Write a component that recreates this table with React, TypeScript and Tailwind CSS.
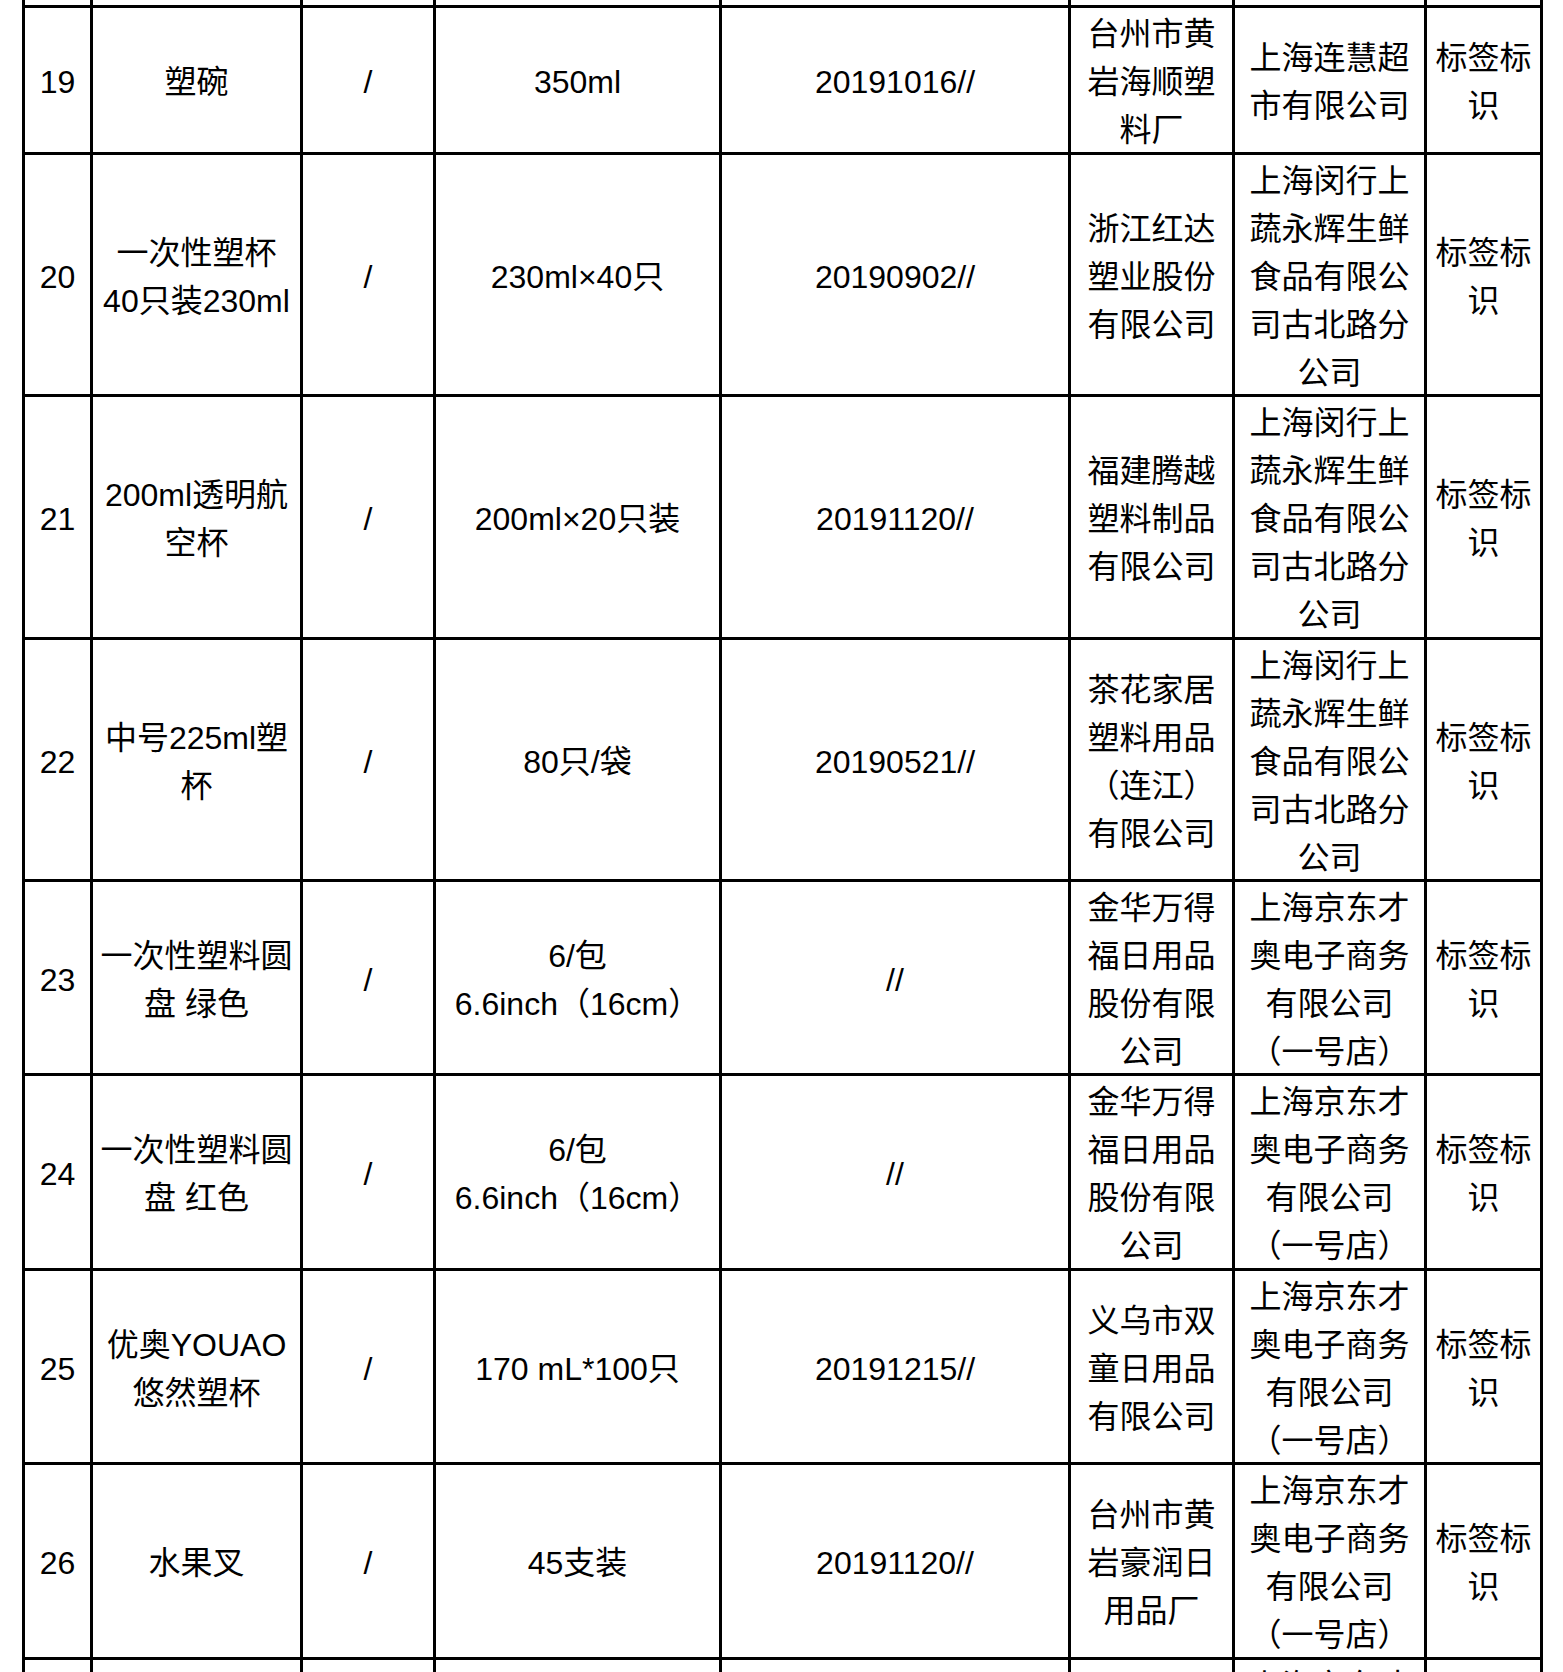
const rows: string[][] = [
  ["", "", "", "", "", "", "", ""],
  ["19", "塑碗", "/", "350ml", "20191016//", "台州市黄\n岩海顺塑\n料厂", "上海连慧超\n市有限公司", "标签标\n识"],
  ["20", "一次性塑杯\n40只装230ml", "/", "230ml×40只", "20190902//", "浙江红达\n塑业股份\n有限公司", "上海闵行上\n蔬永辉生鲜\n食品有限公\n司古北路分\n公司", "标签标\n识"],
  ["21", "200ml透明航\n空杯", "/", "200ml×20只装", "20191120//", "福建腾越\n塑料制品\n有限公司", "上海闵行上\n蔬永辉生鲜\n食品有限公\n司古北路分\n公司", "标签标\n识"],
  ["22", "中号225ml塑\n杯", "/", "80只/袋", "20190521//", "茶花家居\n塑料用品\n（连江）\n有限公司", "上海闵行上\n蔬永辉生鲜\n食品有限公\n司古北路分\n公司", "标签标\n识"],
  ["23", "一次性塑料圆\n盘 绿色", "/", "6/包\n6.6inch（16cm）", "//", "金华万得\n福日用品\n股份有限\n公司", "上海京东才\n奥电子商务\n有限公司\n（一号店）", "标签标\n识"],
  ["24", "一次性塑料圆\n盘 红色", "/", "6/包\n6.6inch（16cm）", "//", "金华万得\n福日用品\n股份有限\n公司", "上海京东才\n奥电子商务\n有限公司\n（一号店）", "标签标\n识"],
  ["25", "优奥YOUAO\n悠然塑杯", "/", "170 mL*100只", "20191215//", "义乌市双\n童日用品\n有限公司", "上海京东才\n奥电子商务\n有限公司\n（一号店）", "标签标\n识"],
  ["26", "水果叉", "/", "45支装", "20191120//", "台州市黄\n岩豪润日\n用品厂", "上海京东才\n奥电子商务\n有限公司\n（一号店）", "标签标\n识"],
  ["", "", "", "", "", "", "上海京东才\n奥电子商务\n有限公司\n（一号店）", ""],
];

function Cell({ text }: { text: string }) {
  return (
    <div className="flex flex-col items-center justify-center bg-white pt-[4px] text-center">
      {text
        ? text.split("\n").map((line, i) => (
            <span key={i} className="block whitespace-pre">
              {line}
            </span>
          ))
        : null}
    </div>
  );
}

export default function App() {
  return (
    <div className="h-[1672px] w-[1563px] overflow-hidden bg-white font-['Liberation_Sans','Noto_Sans_CJK_SC',sans-serif] text-[32px] leading-[48px] text-black">
      <div className="ml-[22px] grid w-fit grid-cols-[65px_207px_130px_283px_346px_161px_189px_113px] grid-rows-[5px_144px_239px_240px_239px_191px_192px_191px_192px_192px] gap-[3px] bg-black px-[3px]">
        {rows.map((row, r) => row.map((text, c) => <Cell key={`${r}-${c}`} text={text} />))}
      </div>
    </div>
  );
}
